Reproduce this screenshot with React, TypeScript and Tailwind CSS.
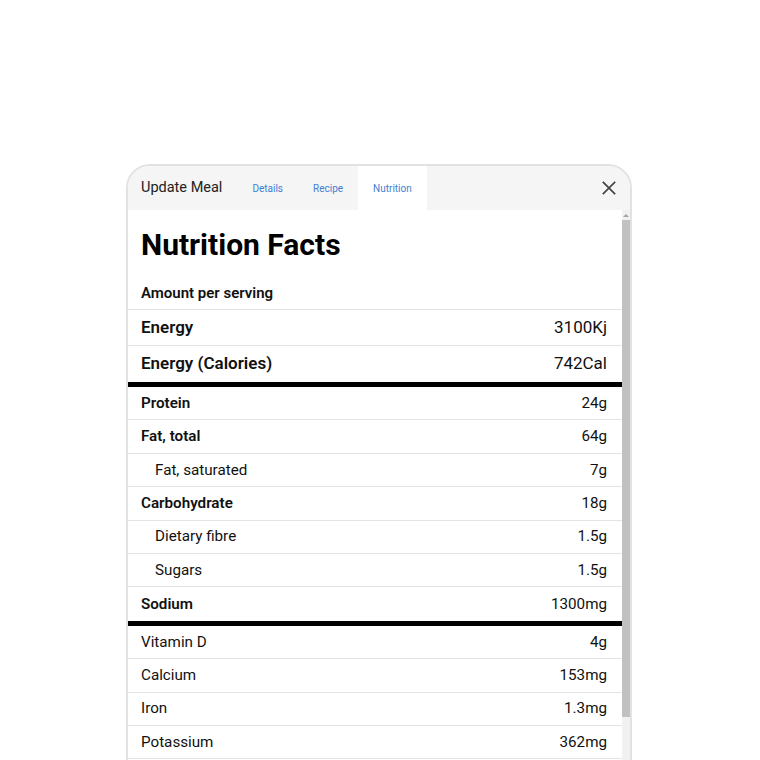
import React from 'react';

type Row = { label: string; value: string; bold?: boolean; indent?: boolean; thick?: boolean };

const macros: Row[] = [
  { label: 'Protein', value: '24g', bold: true },
  { label: 'Fat, total', value: '64g', bold: true },
  { label: 'Fat, saturated', value: '7g', indent: true },
  { label: 'Carbohydrate', value: '18g', bold: true },
  { label: 'Dietary fibre', value: '1.5g', indent: true },
  { label: 'Sugars', value: '1.5g', indent: true },
  { label: 'Sodium', value: '1300mg', bold: true, thick: true },
];

const minerals: Row[] = [
  { label: 'Vitamin D', value: '4g' },
  { label: 'Calcium', value: '153mg' },
  { label: 'Iron', value: '1.3mg' },
  { label: 'Potassium', value: '362mg' },
];

function NutrientRow({ row }: { row: Row }) {
  return (
    <div
      className={`flex items-center justify-between pl-[13px] pr-[15px] text-[15.2px] ${
        row.thick ? 'h-[38.5px] border-b-[5px] border-black' : 'h-[33.4px] border-b border-[#e3e3e3]'
      }`}
    >
      <span className={`${row.bold ? 'font-semibold' : ''} ${row.indent ? 'pl-[14px]' : ''}`}>{row.label}</span>
      <span>{row.value}</span>
    </div>
  );
}

export default function App() {
  const tabs = ['Details', 'Recipe', 'Nutrition'];

  return (
    <div className="h-[760px] w-[760px] overflow-hidden bg-white font-['Roboto',sans-serif] text-[#111]">
      <div className="ml-[126px] mt-[164px] flex h-[640px] w-[506px] flex-col overflow-hidden rounded-t-[24px] border-2 border-[#e2e2e2]">
        {/* Header */}
        <div className="flex h-[44px] shrink-0 items-stretch bg-[#f5f5f5] pl-[13px] pr-[10px]">
          <div className="flex items-center pr-[15px] text-[14.5px] text-[#222]">Update Meal</div>
          {tabs.map((t) => (
            <div
              key={t}
              className={`flex items-center px-[15px] text-[10px] text-[#3f7fd4] ${t === 'Nutrition' ? 'bg-white' : ''}`}
            >
              {t}
            </div>
          ))}
          <div className="flex-1" />
          <button className="flex items-center justify-center">
            <svg width="22" height="22" viewBox="0 0 22 22" fill="none" stroke="#444" strokeWidth="1.7" strokeLinecap="square">
              <path d="M5.4 5.4 L16.6 16.6 M16.6 5.4 L5.4 16.6" />
            </svg>
          </button>
        </div>

        {/* Body */}
        <div className="flex min-h-0 flex-1">
          <div className="flex-1 bg-white">
            <h1 className="px-[13px] pt-[19px] text-[30px] font-bold leading-[32px] text-black">Nutrition Facts</h1>
            <div className="mt-[22px] border-b border-[#e3e3e3] px-[13px] pb-[6px] text-[15px] font-semibold leading-[20px]">
              Amount per serving
            </div>
            <div className="flex h-[36px] items-center justify-between border-b border-[#e3e3e3] pl-[13px] pr-[15px] text-[17px]">
              <span className="font-semibold">Energy</span>
              <span>3100Kj</span>
            </div>
            <div className="flex h-[41px] items-center justify-between border-b-[5px] border-black pl-[13px] pr-[15px] text-[17px]">
              <span className="font-semibold">Energy (Calories)</span>
              <span>742Cal</span>
            </div>
            {macros.map((r) => (
              <NutrientRow key={r.label} row={r} />
            ))}
            {minerals.map((r) => (
              <NutrientRow key={r.label} row={r} />
            ))}
          </div>

          {/* Scrollbar */}
          <div className="flex w-[8px] flex-col items-center bg-[#f1f1f1]">
            <div className="flex h-[10px] w-full items-center justify-center">
              <div className="h-0 w-0 border-x-[3px] border-b-[3px] border-x-transparent border-b-[#a3a3a3]" />
            </div>
            <div className="h-[497px] w-full bg-[#c1c1c1]" />
          </div>
        </div>
      </div>
    </div>
  );
}
